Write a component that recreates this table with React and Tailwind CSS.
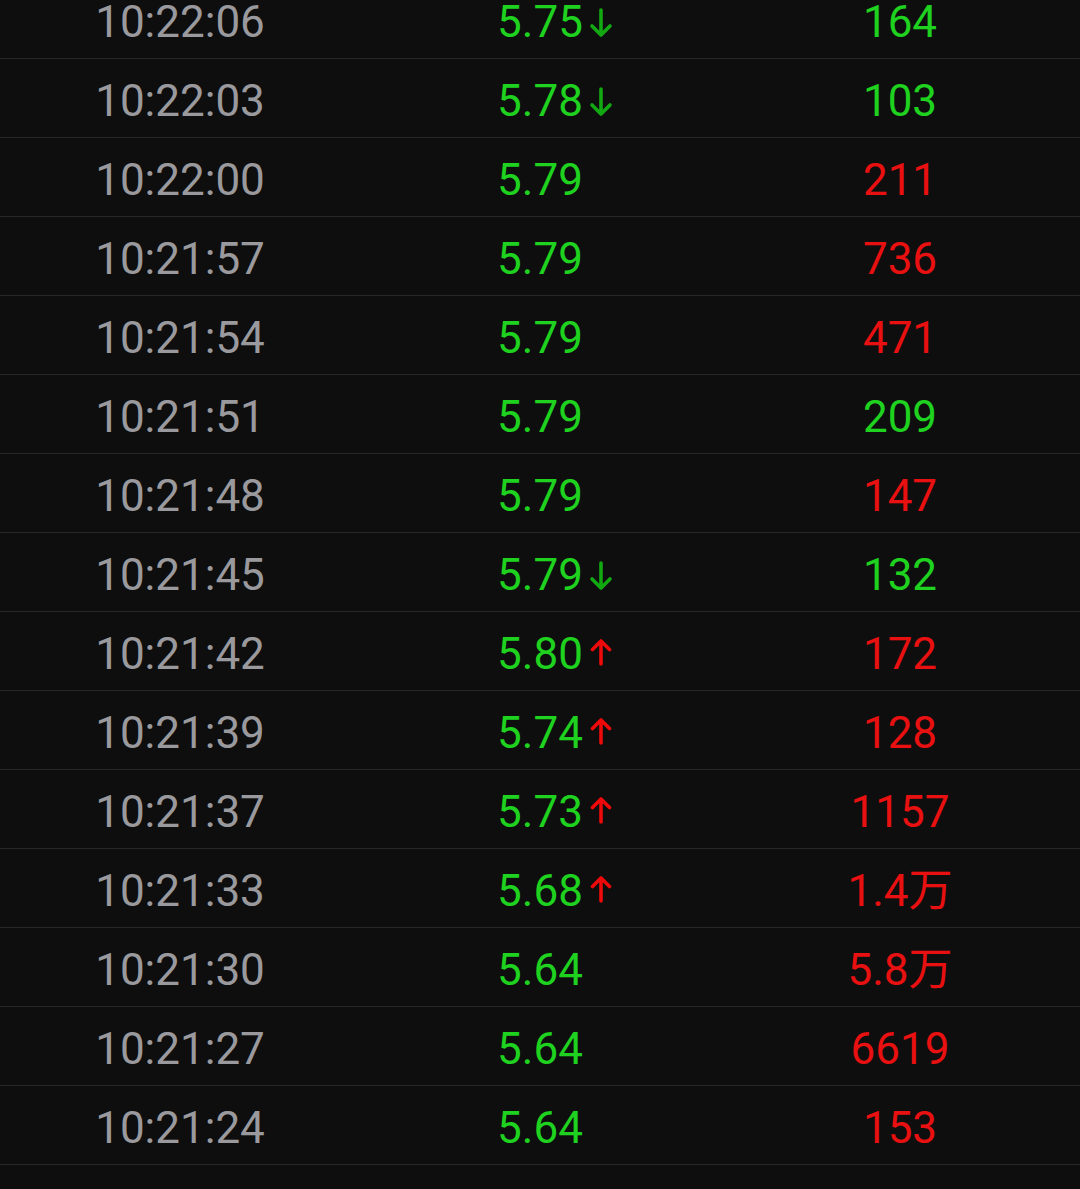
const ROWS = [
  { time: "10:22:06", price: "5.75", dir: "down", vol: "164", up: false },
  { time: "10:22:03", price: "5.78", dir: "down", vol: "103", up: false },
  { time: "10:22:00", price: "5.79", dir: null, vol: "211", up: true },
  { time: "10:21:57", price: "5.79", dir: null, vol: "736", up: true },
  { time: "10:21:54", price: "5.79", dir: null, vol: "471", up: true },
  { time: "10:21:51", price: "5.79", dir: null, vol: "209", up: false },
  { time: "10:21:48", price: "5.79", dir: null, vol: "147", up: true },
  { time: "10:21:45", price: "5.79", dir: "down", vol: "132", up: false },
  { time: "10:21:42", price: "5.80", dir: "up", vol: "172", up: true },
  { time: "10:21:39", price: "5.74", dir: "up", vol: "128", up: true },
  { time: "10:21:37", price: "5.73", dir: "up", vol: "1157", up: true },
  { time: "10:21:33", price: "5.68", dir: "up", vol: "1.4万", up: true },
  { time: "10:21:30", price: "5.64", dir: null, vol: "5.8万", up: true },
  { time: "10:21:27", price: "5.64", dir: null, vol: "6619", up: true },
  { time: "10:21:24", price: "5.64", dir: null, vol: "153", up: true },
];

const DownArrow = () => (
  <svg className="absolute left-full top-1/2 ml-[6px] h-[30px] w-[24px] -translate-y-[14px]" viewBox="0 0 24 30" fill="none">
    <path d="M12 2v25M3 18l9 9 9-9" stroke="#12a812" strokeWidth="3.6" strokeLinecap="round" strokeLinejoin="round" />
  </svg>
);

const UpArrow = () => (
  <svg className="absolute left-full top-1/2 ml-[7px] h-[28px] w-[22px] -translate-y-[16px]" viewBox="0 0 22 28" fill="none">
    <path d="M11 26V3M2.5 11.5L11 3l8.5 8.5" stroke="#ee0a0a" strokeWidth="3.6" strokeLinecap="round" strokeLinejoin="round" />
  </svg>
);

export default function App() {
  return (
    <div className="h-[1189px] w-[1080px] overflow-hidden bg-[#0e0e0e] font-['Roboto','Noto_Sans_CJK_SC',sans-serif] text-[44px] leading-none">
      <div className="-mt-[20px]">
        {ROWS.map((r) => (
          <div key={r.time} className="grid h-[79px] grid-cols-3 items-center border-b border-[#272727] pt-[5px]">
            <div className="text-center text-[#9a9a9e]">{r.time}</div>
            <div className="text-center">
              <span className="relative inline-block text-[#1fd21f]">
                {r.price}
                {r.dir === "down" && <DownArrow />}
                {r.dir === "up" && <UpArrow />}
              </span>
            </div>
            <div className={`text-center ${r.up ? "text-[#e81010]" : "text-[#1fd21f]"}`}>{r.vol}</div>
          </div>
        ))}
      </div>
    </div>
  );
}
